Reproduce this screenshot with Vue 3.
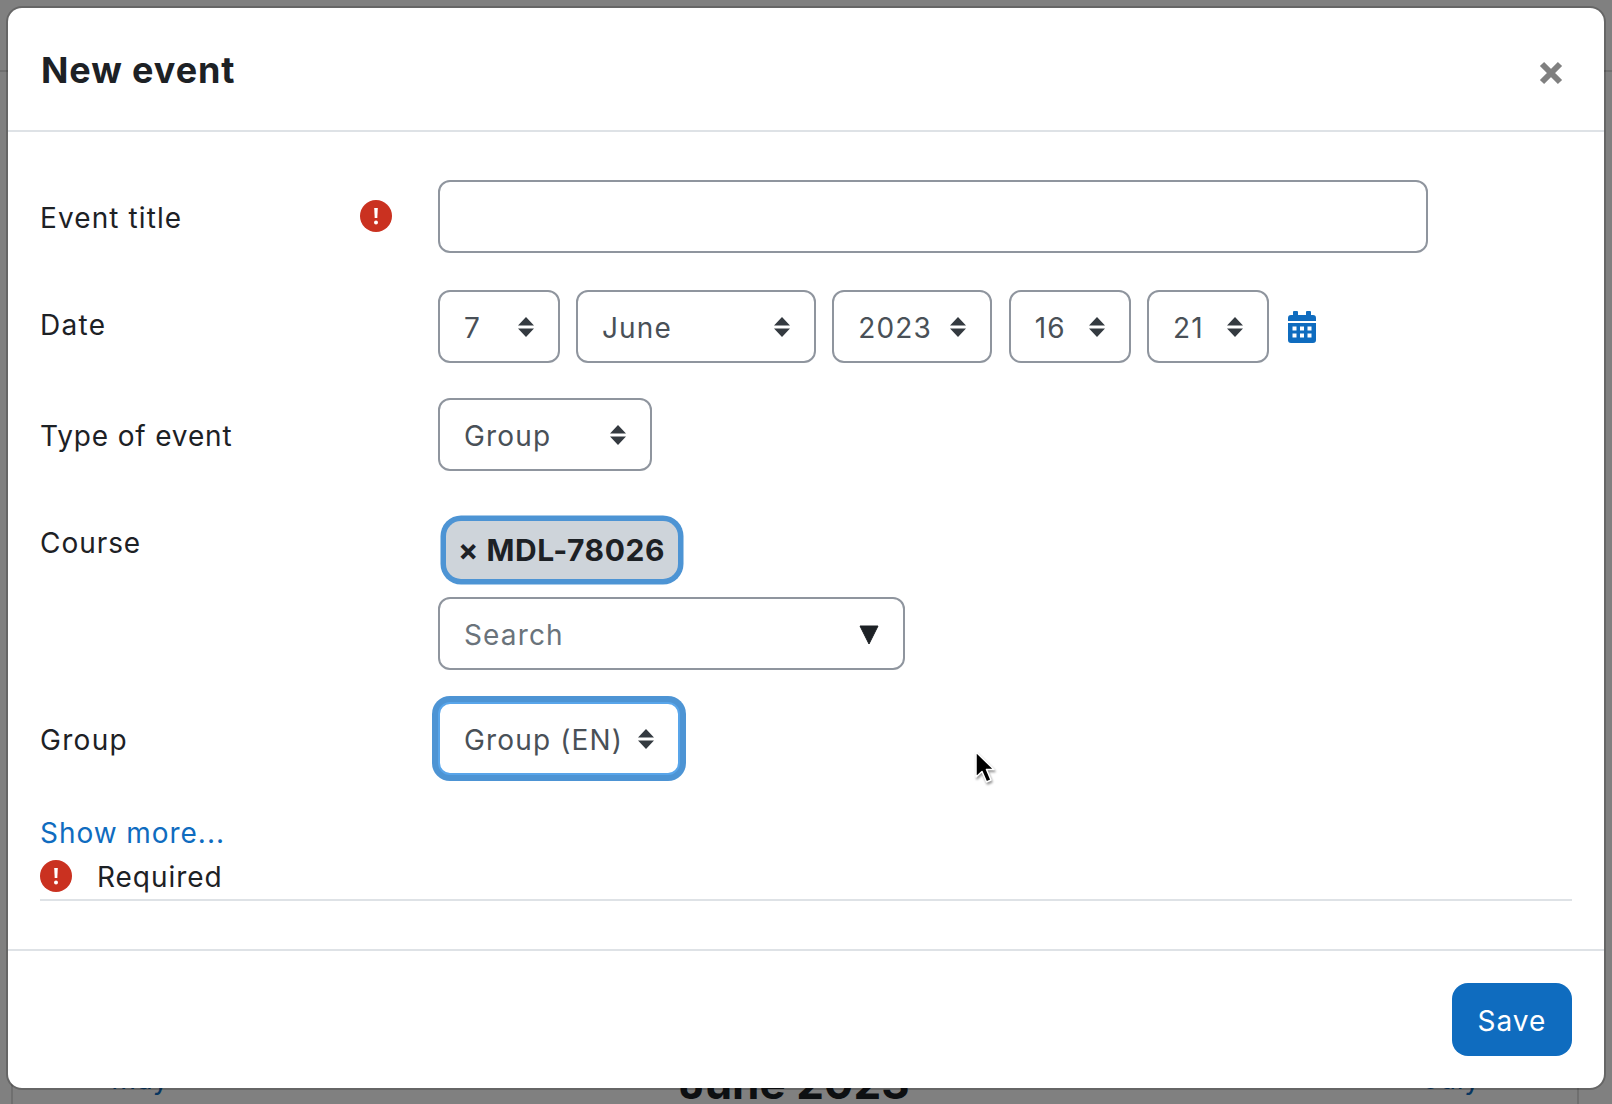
<script setup>
const dateParts = [
  { text: '7', width: 121.5 },
  { text: 'June', width: 240 },
  { text: '2023', width: 160 },
  { text: '16', width: 122 },
  { text: '21', width: 122 },
]
</script>

<template>
  <div class="page">
    <div class="behind">
      <i class="rule-h"></i>
      <i class="rule-left"></i>
      <i class="rule-right"></i>
      <span class="nav nav-prev">May</span>
      <span class="month">June 2023</span>
      <span class="nav nav-next">July</span>
    </div>

    <div class="modal">
      <header class="modal-head">
        <h5 class="title">New event</h5>
        <svg class="close" viewBox="0 0 24 24" width="24" height="24" aria-label="Close">
          <path d="M3 3 21 21M21 3 3 21" stroke="#808080" stroke-width="6" fill="none" />
        </svg>
      </header>

      <main class="modal-body">
        <div class="row row-title">
          <div class="label-col">
            <label class="label label-title">Event title</label>
            <svg class="req" viewBox="0 0 32 32" width="32" height="32">
              <circle cx="16" cy="16" r="16" fill="#ca3120" />
              <path d="M14.2 8h3.6l-.5 10h-2.6z" fill="#fff" />
              <circle cx="16" cy="22.500" r="2" fill="#fff" />
            </svg>
          </div>
          <input class="field text-input" type="text" />
        </div>

        <div class="row row-date">
          <div class="label-col"><label class="label label-date">Date</label></div>
          <div class="date-group">
            <div v-for="p in dateParts" :key="p.text" class="field select" :style="{ width: p.width + 'px' }">
              <span class="value">{{ p.text }}</span>
              <svg class="updown" viewBox="0 0 16 20" width="16" height="20">
                <path d="M8 0 16 8.500H0zM0 11.500H16L8 20z" fill="#343a40" />
              </svg>
            </div>
            <svg class="calendar" viewBox="0 0 28 32" width="28" height="32">
              <path fill="#0f6cbf" fill-rule="evenodd" d="M6 0h3a1 1 0 0 1 1 1v3h8V1a1 1 0 0 1 1-1h3a1 1 0 0 1 1 1v3h2a3 3 0 0 1 3 3v3H0V7a3 3 0 0 1 3-3h2V1a1 1 0 0 1 1-1zM0 12h28v17a3 3 0 0 1-3 3H3a3 3 0 0 1-3-3zm4.500 3.500v4h4v-4zm7.500 0v4h4v-4zm7.500 0v4h4v-4zm-15 7v4h4v-4zm7.500 0v4h4v-4zm7.500 0v4h4v-4z" />
            </svg>
          </div>
        </div>

        <div class="row row-type">
          <div class="label-col"><label class="label label-type">Type of event</label></div>
          <div class="field select select-type">
            <span class="value">Group</span>
            <svg class="updown" viewBox="0 0 16 20" width="16" height="20">
              <path d="M8 0 16 8.500H0zM0 11.500H16L8 20z" fill="#343a40" />
            </svg>
          </div>
        </div>

        <div class="row row-course">
          <div class="label-col"><label class="label label-course">Course</label></div>
          <div class="course-stack">
            <div class="chip"><span class="chip-x">×</span> MDL-78026</div>
            <div class="field search">
              <span class="value">Search</span>
              <svg class="caret" viewBox="0 0 20 20" width="20" height="20">
                <path d="M1 1H19L10 19z" fill="#1d2125" stroke="#1d2125" stroke-width="1" stroke-linejoin="round" />
              </svg>
            </div>
          </div>
        </div>

        <div class="row row-group">
          <div class="label-col"><label class="label label-group">Group</label></div>
          <div class="field select select-group">
            <span class="value">Group (EN)</span>
            <svg class="updown" viewBox="0 0 16 20" width="16" height="20">
              <path d="M8 0 16 8.500H0zM0 11.500H16L8 20z" fill="#343a40" />
            </svg>
          </div>
        </div>

        <a class="more">Show more...</a>
        <div class="required">
          <svg class="req-small" viewBox="0 0 32 32" width="32" height="32">
            <circle cx="16" cy="16" r="16" fill="#ca3120" />
            <path d="M14.2 8h3.6l-.5 10h-2.6z" fill="#fff" />
            <circle cx="16" cy="22.500" r="2" fill="#fff" />
          </svg>
          <span>Required</span>
        </div>
      </main>

      <footer class="modal-foot">
        <button class="save" type="button">Save</button>
      </footer>
    </div>

    <svg class="cursor" viewBox="0 0 24 36" width="24" height="36">
      <path d="M2 1V26L8 20.500 12.500 31 17 29 12.500 18.500H20z" fill="#000" stroke="#fff" stroke-width="1.500" stroke-linejoin="round" />
    </svg>
  </div>
</template>

<style>
html, body { margin: 0; background: #808080; }
</style>

<style scoped>
.page {
  position: relative;
  width: 1612px;
  height: 1104px;
  overflow: hidden;
  background: #808080;
  font-family: Inter, "Liberation Sans", sans-serif;
  font-size: 28px;
  line-height: 42px;
  letter-spacing: .95px;
  color: #1d2125;
  box-sizing: border-box;
  padding: 6px;
}
.behind { position: absolute; inset: 0; }
.rule-h { position: absolute; left: 0; right: 0; top: 70px; height: 2px; background: #6f6f6f; }
.rule-left { position: absolute; left: 11px; top: 1080px; bottom: 0; width: 2px; background: #6f6f6f; }
.rule-right { position: absolute; left: 1577px; top: 1080px; bottom: 0; width: 2px; background: #6f6f6f; }
.nav { position: absolute; top: 1058px; color: #083660; letter-spacing: .6px; }
.nav-prev { left: 111px; }
.nav-next { left: 1423px; }
.month {
  position: absolute;
  left: 679px;
  top: 1050px;
  font-size: 44px;
  line-height: 66px;
  font-weight: 700;
  letter-spacing: 0;
  color: #0e1012;
}

.modal {
  position: relative;
  width: 1600px;
  height: 1084px;
  box-sizing: border-box;
  background: #fff;
  background-clip: padding-box;
  border: 2px solid rgba(0, 0, 0, .2);
  border-radius: 16px;
  display: flex;
  flex-direction: column;
}
.modal-head {
  height: 124px;
  flex: none;
  box-sizing: border-box;
  border-bottom: 2px solid #dee2e6;
  padding: 0 41px 0 33px;
  display: flex;
  justify-content: space-between;
  align-items: flex-start;
}
.title {
  margin: 35px 0 0;
  font-size: 36px;
  line-height: 54px;
  font-weight: 700;
  letter-spacing: .9px;
}
.close { margin-top: 53px; }

.modal-body {
  flex: 1;
  padding: 48px 32px 0 32px;
  display: flex;
  flex-direction: column;
}
.row { display: flex; align-items: flex-start; }
.row-title { margin-bottom: 37px; }
.row-date { margin-bottom: 35px; }
.row-type { margin-bottom: 49px; }
.row-course { margin-bottom: 32px; }
.row-group { margin-bottom: 37px; }
.label-col {
  width: 398px;
  flex: none;
  display: flex;
  justify-content: space-between;
  align-items: flex-start;
  padding-right: 46px;
  box-sizing: border-box;
}
.label { display: block; padding-top: 17px; }
.label-title { letter-spacing: 1.1px; }
.label-date { padding-top: 14px; letter-spacing: 1.3px; }
.label-type { padding-top: 17px; letter-spacing: .85px; }
.label-course { padding-top: 2px; }
.label-group { padding-top: 17px; letter-spacing: 1.3px; }
.req { margin-top: 20px; }

.field {
  height: 73px;
  box-sizing: border-box;
  border: 2px solid #8f959e;
  border-radius: 12px;
  background: #fff;
  color: #495057;
  font: inherit;
  display: flex;
  align-items: center;
  justify-content: space-between;
  padding: 0 24px;
}
.value { padding-top: 2px; letter-spacing: 1.15px; }
.text-input { width: 990px; outline: none; }
.date-group { display: flex; align-items: center; gap: 16.4px; }
.select { flex: none; }
.updown { flex: none; }
.calendar { margin-left: 2.5px; }
.select-type { width: 214px; padding-right: 24px; }
.select-group {
  width: 242px;
  border-color: #58a5ea;
  box-shadow: 0 0 0 6px #4d94d4;
  padding-right: 24px;
}

.course-stack { display: flex; flex-direction: column; align-items: flex-start; }
.chip {
  margin-left: 7.5px;
  margin-top: .5px;
  box-sizing: border-box;
  height: 58px;
  width: 232px;
  border-radius: 15px;
  background: #ced4da;
  box-shadow: 0 0 0 5.5px #4d94d4;
  padding: 0 0 0 12.5px;
  font-size: 30px;
  font-weight: 700;
  line-height: 58px;
  letter-spacing: .55px;
  white-space: pre;
}
.chip-x { font-weight: 700; }
.search {
  width: 467px;
  margin-top: 18.5px;
  color: #6a737b;
  padding-right: 24px;
}
.caret { margin-top: 2px; }

.more { color: #0f6cbf; display: block; }
.required {
  display: flex;
  align-items: center;
  gap: 25px;
  height: 45px;
  border-bottom: 2px solid #dee2e6;
}
.req-small { margin-top: -1px; }

.modal-foot {
  height: 139px;
  flex: none;
  box-sizing: border-box;
  border-top: 2px solid #dee2e6;
  display: flex;
  justify-content: flex-end;
  padding: 32px 32px 0 0;
}
.save {
  width: 120px;
  height: 73px;
  border: 0;
  border-radius: 16px;
  background: #0f6cbf;
  color: #fff;
  font: inherit;
  letter-spacing: 1px;
  padding: 2px 0 0;
}
.cursor { position: absolute; left: 974px; top: 751px; filter: drop-shadow(1px 2px 1px rgba(0,0,0,.4)); }
</style>
